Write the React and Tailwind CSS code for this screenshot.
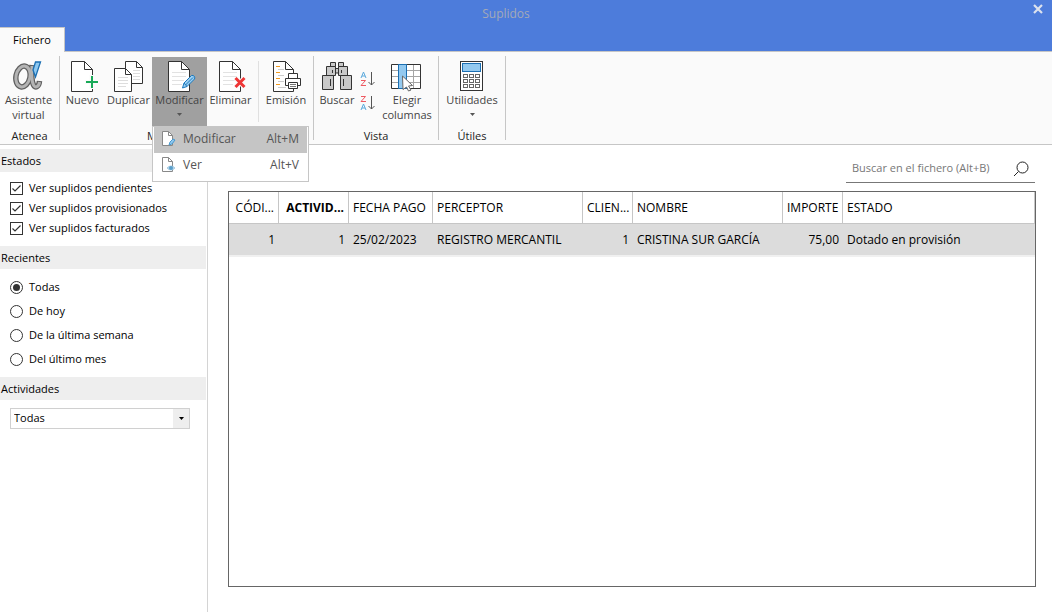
import { useState } from 'react';
import clsx from 'clsx';

const checks = ['Ver suplidos pendientes', 'Ver suplidos provisionados', 'Ver suplidos facturados'];
const periods = ['Todas', 'De hoy', 'De la última semana', 'Del último mes'];

const columns = [
  { title: 'CÓDI...', width: 'w-[50px]', right: true },
  { title: 'ACTIVID...', width: 'w-[70px]', right: true, bold: true },
  { title: 'FECHA PAGO', width: 'w-[84px]' },
  { title: 'PERCEPTOR', width: 'w-[150px]' },
  { title: 'CLIEN...', width: 'w-[50px]', right: true },
  { title: 'NOMBRE', width: 'w-[150px]' },
  { title: 'IMPORTE', width: 'w-[60px]', right: true },
  { title: 'ESTADO', width: '' },
];

const rows = [
  ['1', '1', '25/02/2023', 'REGISTRO MERCANTIL', '1', 'CRISTINA SUR GARCÍA', '75,00', 'Dotado en provisión'],
];

function Icon({ children }) {
  return (
    <svg viewBox="0 0 32 32" className="h-8 w-8 shrink-0" fill="none" aria-hidden="true">
      {children}
    </svg>
  );
}

function Page({ lines }) {
  return (
    <>
      <path d="M4.5 .5H17.5L25.5 8.5V30.5H4.5Z" fill="#fff" stroke="#333" />
      <path d="M17.5 .5V8.5H25.5" stroke="#333" />
      {lines && <path d="M8 11.5H22M8 15.5H22M8 19.5H20M8 23.5H18" stroke="#e2e2e2" />}
    </>
  );
}

function AssistantIcon() {
  return (
    <Icon>
      <g stroke="#606060" strokeWidth="5.5">
        <ellipse cx="10" cy="15.500" rx="7" ry="10.500" transform="rotate(12 10 15.500)" />
        <path d="M19 4C18.500 12 18 19 20.500 24C22 27.500 26 26 26.500 20" />
      </g>
      <g stroke="#b4b4b4" strokeWidth="3">
        <ellipse cx="10" cy="15.500" rx="7" ry="10.500" transform="rotate(12 10 15.500)" />
        <path d="M19 5C18.500 12 18 19 20.500 24C22 27.500 26 26 26.500 21" />
      </g>
      <path d="M22.500 1H27.500L22.500 16L20 9Z" fill="#8ec8f0" stroke="#1b6fb3" strokeWidth="1.3" />
    </Icon>
  );
}

function NewIcon() {
  return (
    <Icon>
      <Page />
      <path d="M24.5 14V28M18 21H31" stroke="#fafafa" strokeWidth="4" />
      <path d="M25 15V27M19 21H31" stroke="#18a957" strokeWidth="2" />
    </Icon>
  );
}

function DuplicateIcon() {
  return (
    <Icon>
      <path d="M12.5 .5H23.5L29.5 6.5V22.5H12.5Z" fill="#fff" stroke="#333" />
      <path d="M23.5 .5V6.5H29.5" stroke="#333" />
      <path d="M20 9.5H27M20 12.5H27M20 15.5H27M20 18.5H27" stroke="#ddd" />
      <path d="M1.5 7.5H12.5L18.5 13.5V30.5H1.5Z" fill="#fff" stroke="#333" />
      <path d="M12.5 7.5V13.5H18.5" stroke="#333" />
      <path d="M5 16.5H15M5 19.5H15M5 22.5H15M5 25.5H13" stroke="#ddd" />
    </Icon>
  );
}

function EditIcon() {
  return (
    <Icon>
      <Page lines />
      <path d="M18.5 27L20 22L27.5 14.5Q29 14 30.5 15.5Q31 17 30.5 18L23 25.5Z" fill="#9dd0f2" stroke="#1b78bd" />
      <path d="M20 22L23 25.5M21.5 24L29 16.5" stroke="#1b78bd" />
    </Icon>
  );
}

function DeleteIcon() {
  return (
    <Icon>
      <Page lines />
      <path d="M20.5 17L29.5 26M29.5 17L20.5 26" stroke="#fafafa" strokeWidth="5" />
      <path d="M20.5 17L29.5 26M29.5 17L20.5 26" stroke="#ee3535" strokeWidth="3" />
    </Icon>
  );
}

function IssueIcon() {
  return (
    <Icon>
      <path d="M3.5 .5H15.5L23.5 8.5V30.5H3.5Z" fill="#fff" stroke="#333" />
      <path d="M15.5 .5V8.5H23.5" stroke="#333" />
      <path d="M6 5.5H10M6 11.5H10M6 17.5H10M6 23.5H10" stroke="#f29a1f" />
      <path d="M8 8.5H14M8 14.5H14M8 20.5H14M8 26.5H16" stroke="#ccc" />
      <path d="M18.5 17.5V12.5H27.5V17.5" fill="#fff" stroke="#333" />
      <path d="M15.5 17.5H30.5V24.5H15.5Z" fill="#fff" stroke="#333" />
      <path d="M18.5 21.5H27.5V27.5H18.5Z" fill="#fff" stroke="#333" />
      <path d="M20 23.5H26M20 25.5H26" stroke="#777" />
    </Icon>
  );
}

function SearchIcon() {
  return (
    <Icon>
      <g fill="#c9c9c9" stroke="#333">
        <path d="M9.5 1.5H14.5V5.5H9.5ZM17.5 1.5H22.5V5.5H17.5Z" />
        <path d="M14.5 7.5H17.5V12H14.5Z" />
        <path d="M5.5 5.5H14.5V14.5H5.5ZM17.5 5.5H26.5V14.5H17.5Z" />
        <path d="M1.5 14.5H12.5V28.5H1.5ZM19.5 14.5H30.5V28.5H19.5Z" />
      </g>
      <path d="M11.5 9V12M20.5 9V12M9.5 18V25M22.5 18V25" stroke="#333" />
    </Icon>
  );
}

function ColumnsIcon() {
  return (
    <Icon>
      <path d="M.5 3.5H29.5V27.5H.5Z" fill="#fff" stroke="#333" />
      <path d="M1 9.5H29M1 15.5H29M1 21.5H29M22.5 4V27" stroke="#a5a5a5" />
      <path d="M7.5 3.5H15.5V27.5H7.5Z" fill="#93c9ef" stroke="#1b6fb3" />
      <path d="M11.5 15L21.5 24.5L17.5 25L20 29L17.5 30L15.5 26L12 28.5Z" fill="#fff" stroke="#666" />
    </Icon>
  );
}

function CalculatorIcon() {
  return (
    <Icon>
      <rect x="4.5" y=".5" width="22" height="29" fill="#fff" stroke="#333" />
      <rect x="6.5" y="2.5" width="18" height="8" fill="#93c9ef" stroke="#1b6fb3" />
      {[13.5, 18.5, 23.5].map((y) =>
        [7.5, 13.5, 19.5].map((x) => (
          <rect key={`${x}-${y}`} x={x} y={y} width="4" height="3" stroke="#666" />
        ))
      )}
    </Icon>
  );
}

function SortIcon({ desc }) {
  return (
    <svg viewBox="0 0 16 16" className="h-4 w-4" fill="none" aria-hidden="true">
      <g transform={desc ? 'translate(0 8)' : undefined}>
        <path d="M1 7L3.5 1L6 7M2 5H5" stroke="#5aa9dc" />
      </g>
      <g transform={desc ? 'translate(0 -8)' : undefined}>
        <path d="M1 9.5H5.5L1 14.5H6" stroke="#ee5a62" />
      </g>
      <path d="M11.5 1V14M8.5 11L11.5 14L14.5 11" stroke="#555" />
    </svg>
  );
}

function MenuPageIcon({ view }) {
  return (
    <svg viewBox="0 0 16 16" className="h-4 w-4 shrink-0" fill="none" aria-hidden="true">
      <path d="M1.5 .5H7.5L11.5 4.5V14.5H1.5Z" fill="#fff" stroke="#888" />
      <path d="M7.5 .5V4.5H11.5" stroke="#888" />
      {view ? (
        <>
          <path d="M6 11Q10 7 14 11Q10 15 6 11Z" fill="#b8d8ec" stroke="#a5cbe2" />
          <circle cx="10" cy="11" r="2" fill="#5b9fca" />
        </>
      ) : (
        <path d="M8 14L9 11L12 8L14 9L11 13Z" fill="#8ec8f0" stroke="#4a98cc" />
      )}
    </svg>
  );
}

function Caret({ className }) {
  return (
    <svg viewBox="0 0 5 3" className={clsx('h-[3px] w-[5px]', className)} aria-hidden="true">
      <path d="M0 0H5L2.5 3Z" fill="currentColor" />
    </svg>
  );
}

function RibbonButton({ icon, label, width, caret, active, ...props }) {
  return (
    <button
      type="button"
      className={clsx(
        'flex h-[69px] flex-col items-center pt-1 text-[11px] leading-[15px] text-[#444]',
        width,
        active && 'bg-[#a0a0a0]'
      )}
      {...props}
    >
      {icon}
      <span className="-mt-px whitespace-pre">{label}</span>
      {caret && <Caret className="mt-1.5 text-[#555]" />}
    </button>
  );
}

function RibbonGroup({ title, children }) {
  return (
    <>
      <section className="flex flex-col pt-[5px]">
        <div className="flex">{children}</div>
        <h2 className="pt-0.5 text-center text-[11px] leading-4 text-[#222]">{title}</h2>
      </section>
      <div className="my-1 w-px bg-[#c6c6c6]" />
    </>
  );
}

function MenuItem({ label, shortcut, view, selected }) {
  return (
    <button
      type="button"
      role="menuitem"
      className={clsx('flex h-[26px] w-full items-center pr-2 pb-0.5 pl-[7px] text-xs text-[#555]', selected && 'bg-[#c5c5c5]')}
    >
      <MenuPageIcon view={view} />
      <span className="ml-1.5 flex-1 text-left">{label}</span>
      <span>{shortcut}</span>
    </button>
  );
}

function SectionTitle({ children }) {
  return <h3 className="mr-px h-[23px] bg-[#eee] pl-px leading-[23px]">{children}</h3>;
}

export default function App() {
  const [menuOpen, setMenuOpen] = useState(true);

  return (
    <div className="flex min-h-screen flex-col bg-white font-['Open_Sans','Noto_Sans',sans-serif] text-[11px] text-black">
      {/* Title bar */}
      <header className="bg-[#4d7cdb]">
        <div className="grid h-[27px] grid-cols-[1fr_auto_1fr] items-center">
          <h1 className="col-start-2 pr-10 text-xs text-[#a3a9b8]">Suplidos</h1>
          <button type="button" aria-label="Cerrar" className="mr-2 mb-2.5 justify-self-end">
            <svg viewBox="0 0 12 10" className="h-2.5 w-3" aria-hidden="true">
              <path d="M2 1L10 9M10 1L2 9" stroke="#dde2ee" strokeWidth="2.2" />
            </svg>
          </button>
        </div>
        <nav className="flex border-b border-[#c6c6c6]">
          <button type="button" className="-mb-px h-[25px] w-[65px] border-t border-r border-[#c6c6c6] bg-[#fafafa]">
            Fichero
          </button>
        </nav>
      </header>

      {/* Ribbon */}
      <div className="flex border-b border-[#c6c6c6] bg-[#fafafa]">
        <RibbonGroup title="Atenea">
          <RibbonButton icon={<AssistantIcon />} label={'Asistente\nvirtual'} width="w-[59px] pr-0.5" />
        </RibbonGroup>
        <RibbonGroup title="Mantenimiento">
          <RibbonButton icon={<NewIcon />} label="Nuevo" width="w-[45px]" />
          <RibbonButton icon={<DuplicateIcon />} label="Duplicar" width="w-[47px]" />
          <div className="relative">
            <RibbonButton
              icon={<EditIcon />}
              label="Modificar"
              width="w-[55px]"
              caret
              active={menuOpen}
              onClick={() => setMenuOpen(!menuOpen)}
            />
            {menuOpen && (
              <div role="menu" className="absolute top-full left-0 z-10 w-[157px] border border-[#c6c6c6] bg-white px-px pb-0.5">
                <MenuItem label="Modificar" shortcut="Alt+M" selected />
                <MenuItem label="Ver" shortcut="Alt+V" view />
              </div>
            )}
          </div>
          <RibbonButton icon={<DeleteIcon />} label="Eliminar" width="w-[47px]" />
          <div className="mt-1 mb-1 ml-1 w-px bg-[#e0e0e0]" />
          <RibbonButton icon={<IssueIcon />} label="Emisión" width="w-[54px]" />
        </RibbonGroup>
        <RibbonGroup title="Vista">
          <RibbonButton icon={<SearchIcon />} label="Buscar" width="w-[46px]" />
          <div className="flex w-4 flex-col gap-2 pt-3.5">
            <button type="button" aria-label="Orden ascendente">
              <SortIcon />
            </button>
            <button type="button" aria-label="Orden descendente">
              <SortIcon desc />
            </button>
          </div>
          <RibbonButton icon={<ColumnsIcon />} label={'Elegir\ncolumnas'} width="w-[62px]" />
        </RibbonGroup>
        <RibbonGroup title="Útiles">
          <RibbonButton icon={<CalculatorIcon />} label="Utilidades" width="w-[66px]" caret />
        </RibbonGroup>
      </div>

      <div className="flex flex-1">
        {/* Filters */}
        <aside className="w-52 shrink-0 border-r border-[#d4d4d4] pt-1">
          <SectionTitle>Estados</SectionTitle>
          <div className="pt-1.5 pb-2 pl-2.5">
            {checks.map((text) => (
              <label key={text} className="flex h-5 items-center gap-1.5">
                <span className="grid">
                  <input
                    type="checkbox"
                    defaultChecked
                    className="peer col-start-1 row-start-1 h-[13px] w-[13px] appearance-none border border-[#333] bg-white"
                  />
                  <svg viewBox="0 0 13 13" className="pointer-events-none invisible col-start-1 row-start-1 h-[13px] w-[13px] peer-checked:visible" fill="none" aria-hidden="true">
                    <path d="M2.5 6.5L5 9L10.5 3.5" stroke="#333" strokeWidth="1.2" />
                  </svg>
                </span>
                {text}
              </label>
            ))}
          </div>

          <SectionTitle>Recientes</SectionTitle>
          <div className="py-1.5 pl-2.5">
            {periods.map((text, i) => (
              <label key={text} className="flex h-6 items-center gap-1.5">
                <input
                  type="radio"
                  name="periodo"
                  defaultChecked={i === 0}
                  className="grid h-[13px] w-[13px] appearance-none place-items-center rounded-full border border-[#333] bg-white before:h-[7px] before:w-[7px] before:rounded-full checked:before:bg-[#333]"
                />
                {text}
              </label>
            ))}
          </div>

          <SectionTitle>Actividades</SectionTitle>
          <div className="mt-2 mr-[17px] ml-2.5 grid h-[21px] border border-[#d0d0d0]">
            <select aria-label="Actividades" className="col-start-1 row-start-1 appearance-none pl-[3px]">
              <option>Todas</option>
            </select>
            <span className="pointer-events-none col-start-1 row-start-1 flex w-4 items-center justify-center justify-self-end bg-[#eee]">
              <Caret />
            </span>
          </div>
        </aside>

        {/* Records */}
        <main className="flex min-w-0 flex-1 flex-col pt-2 pr-4 pb-[25px] pl-5">
          <label className="mr-px mb-2 flex h-[30px] w-[189px] items-center self-end border-b border-[#777] pt-0.5 pr-1.5 pl-1.5">
            <input
              type="text"
              aria-label="Buscar en el fichero"
              placeholder="Buscar en el fichero (Alt+B)"
              className="min-w-0 flex-1 outline-none placeholder:text-[#777]"
            />
            <svg viewBox="0 0 16 16" className="h-4 w-4 shrink-0" fill="none" stroke="#222" aria-hidden="true">
              <circle cx="9.5" cy="6.5" r="5.5" />
              <path d="M5.5 10.5L1 15" />
            </svg>
          </label>

          <div className="flex-1 border border-[#666]">
            <table className="w-full table-fixed border-separate border-spacing-0 text-xs">
              <thead>
                <tr className="h-8">
                  {columns.map((col) => (
                    <th
                      key={col.title}
                      className={clsx(
                        'overflow-hidden border-r border-b border-[#c6c6c6] px-1 whitespace-nowrap',
                        col.width,
                        col.right ? 'text-right' : 'text-left',
                        col.bold ? 'font-bold' : 'font-normal'
                      )}
                    >
                      {col.title}
                    </th>
                  ))}
                </tr>
              </thead>
              <tbody>
                {rows.map((row) => (
                  <tr key={row[0]} className="h-[33px]">
                    {row.map((value, i) => (
                      <td
                        key={columns[i].title}
                        className={clsx(
                          'border-b-2 border-[#f0f0f0] bg-[#dcdcdc] px-1 whitespace-nowrap',
                          columns[i].right && 'text-right'
                        )}
                      >
                        {value}
                      </td>
                    ))}
                  </tr>
                ))}
              </tbody>
            </table>
          </div>
        </main>
      </div>
    </div>
  );
}
